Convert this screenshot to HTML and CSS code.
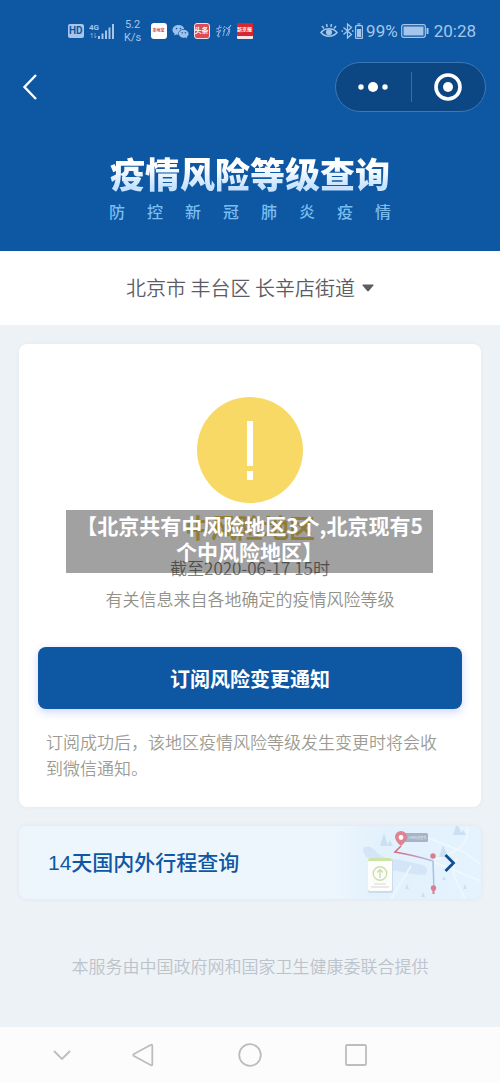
FILE: index.html
```html
<!DOCTYPE html>
<html lang="zh-CN">
<head>
<meta charset="utf-8">
<meta name="viewport" content="width=device-width, initial-scale=1">
<title>疫情风险等级查询</title>
<link rel="stylesheet" href="styles.css">
</head>
<body>
<div class="page">
  <header class="hero">
    <div class="status">
      <div class="status-left">
        <span class="hd">HD</span>
        <svg class="signal" width="26" height="18" viewBox="0 0 26 18" fill="currentColor" aria-hidden="true">
          <text class="signal-text" x="0" y="8">4G</text>
          <path d="M3 11v5M1.500 13L3 11M6 11v5M7.500 14L6 16" stroke="currentColor" fill="none" opacity=".6"/>
          <path d="M9 14h2v3H9zM12.500 11.500h2V17h-2zM16 8.500h2V17h-2zM19.500 5.500h2V17h-2zM23 2h2v15h-2z"/>
        </svg>
        <span class="speed">5.2<br>K/s</span>
        <span class="app app-white">本地宝</span>
        <svg width="17" height="15" viewBox="0 0 17 15" aria-hidden="true">
          <path fill="#9fc1e8" d="M6.500 1C3 1 .5 3.200.5 5.900c0 1.500.8 2.800 2.100 3.700L2.200 11.500l2.100-1.100 2 .3C6 7.500 8.500 5 12.200 5 11.600 2.600 9.400 1 6.500 1z"/>
          <path fill="#9fc1e8" d="M11.800 5.700c-2.800 0-5 1.800-5 4.100s2.200 4 5 4l1.500-.2 1.800 1-.4-1.700c1.200-.8 1.900-1.900 1.900-3.100 0-2.300-2.100-4.100-4.800-4.100z"/>
          <g fill="#0d57a3"><circle cx="4.500" cy="4.600" r=".8"/><circle cx="8.500" cy="4.600" r=".8"/><circle cx="10.200" cy="8.700" r=".7"/><circle cx="13.400" cy="8.700" r=".7"/></g>
        </svg>
        <span class="app app-red">头条</span>
        <svg width="17" height="14" viewBox="0 0 17 14" fill="none" stroke="#9fc1e8" stroke-width=".8" aria-hidden="true">
          <path d="M1 5l6-2M5 1L3 6M1 8l5-2-4 6M4 7l-1 6 2-1M8 5l2-3M8 8l2-3-2 7M11 3l1 2 4-4-3 5 2-1-4 7M13 7l2 0-2 5"/>
        </svg>
        <span class="app app-news">新京报</span>
      </div>
      <div class="status-right">
        <svg width="18" height="16" viewBox="0 0 18 16" fill="none" stroke="currentColor" stroke-width="1.500" aria-hidden="true">
          <path d="M1 9.500c4-5 12-5 16 0-4 5-12 5-16 0zM2 3l2 2.500M6.500 1l.7 3M11.500 1l-.7 3M16 3l-2 2.500"/>
          <circle cx="9" cy="9.300" r="2.300" fill="currentColor"/>
        </svg>
        <svg width="22" height="16" viewBox="0 0 22 16" fill="none" stroke="currentColor" stroke-width="1.300" aria-hidden="true">
          <path d="M2.500 4.500l8 7L6.500 15V1l4 3.500-8 7M.5 8h1.500M11 8h1.500"/>
          <rect x="14.600" y="2.600" width="6.800" height="12.800" rx="1"/>
          <path d="M16.500 1h3" /><path fill="currentColor" stroke="none" d="M16 6h4v8h-4z"/>
        </svg>
        <span class="status-num">99%</span>
        <svg width="28" height="14" viewBox="0 0 28 14" aria-hidden="true">
          <rect x=".7" y=".7" width="23.600" height="12.600" rx="2" fill="none" stroke="currentColor" stroke-width="1.200"/>
          <rect x="2.500" y="2.500" width="20" height="9" fill="currentColor"/>
          <path d="M25.500 4h2v6h-2z" fill="currentColor"/>
        </svg>
        <span class="status-num clock">20:28</span>
      </div>
    </div>
    <div class="topbar">
      <button class="back" type="button" aria-label="返回">
        <svg width="16" height="28" viewBox="0 0 16 28" fill="none" stroke="#fff" stroke-width="2.400"><path d="M14 2L2.500 14 14 26"/></svg>
      </button>
      <div class="capsule">
        <button type="button" aria-label="更多">
          <svg width="30" height="12" viewBox="0 0 30 12" fill="#fff"><circle cx="3" cy="6" r="2.700"/><circle cx="15" cy="6" r="5"/><circle cx="27" cy="6" r="2.700"/></svg>
        </button>
        <button type="button" aria-label="关闭">
          <svg width="28" height="28" viewBox="0 0 28 28"><circle cx="14" cy="14" r="12" fill="none" stroke="#fff" stroke-width="3.600"/><circle cx="14" cy="14" r="5" fill="#fff"/></svg>
        </button>
      </div>
    </div>
    <h1 class="title">疫情风险等级查询</h1>
    <p class="subtitle"><span>防</span><span>控</span><span>新</span><span>冠</span><span>肺</span><span>炎</span><span>疫</span><span>情</span></p>
  </header>

  <label class="region">
    <select class="region-select" aria-label="选择地区"><option>北京市 丰台区 长辛店街道</option></select>
    <svg width="12" height="8" viewBox="0 0 12 8" fill="#5c5c66" aria-hidden="true"><path d="M1 .5h10q1 0 .4.900L6.800 7q-.8.800-1.600 0L.6 1.400Q0 .5 1 .5z"/></svg>
  </label>

  <main class="content">
    <section class="card">
      <svg class="alert" width="106" height="106" viewBox="0 0 106 106" aria-hidden="true">
        <circle cx="53" cy="53" r="53" fill="#f8d966"/>
        <path fill="#fff" d="M50 24h6v45h-6zM50 74h6v9h-6z"/>
      </svg>
      <h2 class="level">中风险地区</h2>
      <p class="date">截至2020-06-17 15时</p>
      <p class="source">有关信息来自各地确定的疫情风险等级</p>
      <button class="subscribe" type="button">订阅风险变更通知</button>
      <p class="note">订阅成功后，该地区疫情风险等级发生变更时将会收到微信通知。</p>
      <p class="caption">【北京共有中风险地区3个,北京现有5个中风险地区】</p>
    </section>

    <a class="trip" href="#trip">
      <span class="trip-text">14天国内外行程查询</span>
      <svg class="trip-map" width="150" height="73" viewBox="0 0 150 73" aria-hidden="true">
        <defs>
          <linearGradient id="fade"><stop offset="0" stop-color="#dceefb" stop-opacity="0"/><stop offset=".4" stop-color="#e2f1fc"/><stop offset="1" stop-color="#e4f3fd"/></linearGradient>
          <linearGradient id="route" gradientUnits="userSpaceOnUse" x1="64" y1="0" x2="103" y2="0"><stop offset="0" stop-color="#d9687f"/><stop offset="1" stop-color="#a9c5e9"/></linearGradient>
        </defs>
        <path fill="url(#fade)" d="M0 0h150v73H0z"/>
        <path fill="#d3e5f7" d="M32 22q6-4 12 2c5 8 16 9 26 10l22 5q7 4 2 10-10 0-23-3-20-3-28-10-12-6-11-14z"/>
        <g fill="none" stroke="#f0f8fe" stroke-width="1.600"><path d="M136 0q3 14-8 22-14 10-28 13l50 20M85 7l50 20 15 12M126 32q-6 14-2 20l10 21M80 40L60 73"/></g>
        <g fill="#cbe0f3"><path d="M53 7l4 13h-8zM59 14l3 6h-6zM126-3l5 12h-9zM132 4l3 5h-6zM112 19l5 12h-9zM76 58l2 5h-4zM92 66l2 5h-4zM134 58l2 5h-4zM113 50l2 4h-4z"/></g>
        <path d="M70 20L64 26q18 3 38 9l1 30" fill="none" stroke="url(#route)" stroke-width="1.600"/>
        <rect x="72" y="7" width="25" height="9" rx="1.500" fill="#a6b4c5"/>
        <text class="map-label" x="77" y="13">14天轨迹查询</text>
        <path fill="#df8291" d="M70 20q-6-5-6-9a6 6 0 0 1 12 0q0 4-6 9z"/><circle cx="70" cy="11.500" r="2.400" fill="#fff"/>
        <g fill="#d97d90"><circle cx="102" cy="30" r="2.700"/><circle cx="102.500" cy="62" r="2.700"/><path d="M101.500 64h2v4h-2z"/></g>
        <rect x="37" y="33" width="25" height="34" rx="2" fill="#cbdced"/>
        <rect x="37" y="32" width="24" height="33" rx="2" fill="#fdfefb"/>
        <path fill="#cbe5a6" d="M39 32h20q2 0 2 3H37q0-3 2-3z"/>
        <g fill="none" stroke="#cbdfa8" stroke-width="1.400"><circle cx="49" cy="47.500" r="6.800"/><path d="M49 52v-8M46 46.500l3-3 3 3"/><path stroke="#d2d7db" stroke-width="1" d="M43 58h12M40 61h18"/></g>
        <path d="M114.500 29l8 8-8 8" fill="none" stroke="#0d4f94" stroke-width="2.800"/>
      </svg>
    </a>
    <p class="provider">本服务由中国政府网和国家卫生健康委联合提供</p>
  </main>

  <nav class="sysnav">
    <button type="button" aria-label="收起"><svg width="22" height="24" viewBox="0 0 22 24"><path d="M3 8l8 8 8-8"/></svg></button>
    <button type="button" aria-label="返回上一页"><svg width="24" height="24" viewBox="0 0 24 24"><path d="M20 1.800L3 11q-1.500 1 0 2l17 9.200q1.300.5 1.300-1V3q0-1.700-1.300-1.200z"/></svg></button>
    <button type="button" aria-label="主屏幕"><svg width="24" height="24" viewBox="0 0 24 24"><circle cx="12" cy="12" r="10.800"/></svg></button>
    <button type="button" aria-label="最近任务"><svg width="24" height="24" viewBox="0 0 24 24"><rect x="2" y="2" width="20" height="20" rx="1"/></svg></button>
  </nav>
</div>
</body>
</html>
```
FILE: styles.css
```css
* {
  box-sizing: border-box;
}

body {
  margin: 0;
  font-family: "Noto Sans CJK SC", sans-serif;
  font-weight: 350;
  background: #edf2f6;
}

h1, h2, p {
  margin: 0;
}

button {
  padding: 0;
  border: 0;
  background: none;
  font: inherit;
}

svg {
  display: block;
  flex: none;
}

.page {
  display: flex;
  flex-direction: column;
  min-height: 100vh;
}

/* Header */
.hero {
  padding-bottom: 28px;
  background: #0d57a3;
  color: #fff;
}

.status {
  display: flex;
  justify-content: space-between;
  align-items: center;
  height: 62px;
  padding: 0 24px 0 68px;
  color: #a5c6ea;
  font-family: Roboto, "Noto Sans CJK SC", sans-serif;
  font-weight: 400;
}

.status-left,
.status-right {
  display: flex;
  align-items: center;
}

.status-left {
  gap: 5px;
}

.status-right {
  gap: 3px;
}

.hd {
  padding: 0 1px;
  border-radius: 2px;
  background: #a5c6ea;
  color: #0d57a3;
  font-size: 10px;
  line-height: 14px;
  font-weight: 700;
}

.signal-text {
  font-size: 8px;
  font-weight: 700;
}

.speed {
  width: 26px;
  font-size: 11px;
  line-height: 13px;
  text-align: center;
}

.app {
  width: 16px;
  height: 16px;
  border-radius: 3px;
  overflow: hidden;
  text-align: center;
  white-space: nowrap;
  font-weight: 700;
  line-height: 16px;
}

.app-white {
  background: #fff;
  color: #cf4b4b;
  font-size: 4px;
}

.app-red {
  border: 1px solid #f3dfe4;
  background: #dd4b55;
  color: #fff;
  font-size: 7px;
  line-height: 14px;
}

.app-news {
  border-bottom: 3px solid #f5e6ea;
  border-radius: 1px;
  background: #d9252f;
  color: #fff;
  font-size: 5px;
  line-height: 13px;
}

.status-num {
  font-size: 17px;
  line-height: 20px;
}

.clock {
  margin-left: 2px;
}

.topbar {
  display: flex;
  justify-content: space-between;
  align-items: center;
  padding: 0 14px 0 22px;
}

.capsule {
  display: flex;
  width: 151px;
  height: 50px;
  border: 1px solid #3d78b6;
  border-radius: 25px;
  background: #0c4783;
}

.capsule button {
  display: grid;
  place-items: center;
  flex: 1;
}

.capsule button + button {
  position: relative;
}

.capsule button + button::before {
  content: "";
  position: absolute;
  left: 0;
  top: 9px;
  bottom: 9px;
  width: 1px;
  background: #3b6ea5;
}

.title {
  margin-top: 40px;
  background: linear-gradient(#fff 35%, #c5e2ff 85%);
  background-clip: text;
  -webkit-background-clip: text;
  color: transparent;
  font-size: 35px;
  line-height: 42px;
  font-weight: 900;
  text-align: center;
}

.subtitle {
  display: flex;
  justify-content: space-between;
  width: 282px;
  margin: 5px auto 0;
  color: #79bdf0;
  font-size: 16px;
  line-height: 24px;
  font-weight: 500;
}

/* Region picker */
.region {
  display: flex;
  justify-content: center;
  align-items: center;
  gap: 7px;
  height: 74px;
  background: #fff;
}

.region-select {
  appearance: none;
  padding: 0;
  border: 0;
  background: none;
  color: #5c5c66;
  font-family: inherit;
  font-size: 20px;
  font-weight: inherit;
  line-height: 30px;
}

/* Cards */
.content {
  display: flex;
  flex-direction: column;
  flex: 1;
  gap: 19px;
  padding: 19px;
}

.card {
  position: relative;
  display: flex;
  flex-direction: column;
  align-items: center;
  padding: 53px 19px 26px;
  border-radius: 8px;
  background: #fff;
  box-shadow: 0 0 4px rgba(30, 60, 100, 0.05);
  text-align: center;
}

.level {
  margin-top: 4px;
  color: #e5c659;
  font-size: 26px;
  line-height: 40px;
  font-weight: 700;
}

.date,
.source {
  font-size: 17px;
  line-height: 26px;
}

.date {
  margin-top: 8px;
  color: #7d7d7b;
}

.source {
  margin-top: 5px;
  color: #929289;
}

.subscribe {
  align-self: stretch;
  height: 62px;
  margin-top: 35px;
  border-radius: 8px;
  background: #0d57a3;
  box-shadow: 0 3px 8px rgba(60, 90, 240, 0.25);
  color: #fff;
  font-size: 20px;
  font-weight: 700;
}

.note {
  align-self: stretch;
  margin-top: 20px;
  padding: 0 20px 0 8px;
  color: #9c9c94;
  font-size: 17px;
  line-height: 26px;
  text-align: left;
}

.caption {
  position: absolute;
  top: 166px;
  left: 47px;
  right: 48px;
  padding: 2px 8px 9px;
  background: rgba(0, 0, 0, 0.37);
  color: #fff;
  font-size: 21px;
  line-height: 26px;
  font-weight: 700;
}

.trip {
  display: flex;
  justify-content: space-between;
  align-items: center;
  padding-left: 29px;
  border-radius: 8px;
  background: #eef6fd;
  box-shadow: 0 0 5px rgba(60, 90, 180, 0.08);
  color: #0d57a3;
  text-decoration: none;
  overflow: hidden;
}

.trip-text {
  padding-bottom: 4px;
  font-family: "Liberation Sans", "Noto Sans CJK SC", sans-serif;
  font-size: 21px;
  font-weight: 500;
}

.map-label {
  fill: #e9eff5;
  font-size: 3px;
}

.provider {
  margin-top: 35px;
  color: #bcc3ca;
  font-size: 17px;
  line-height: 26px;
  text-align: center;
}

/* System navigation */
.sysnav {
  display: grid;
  grid-template-columns: 80fr 82fr 132fr 80fr;
  height: 56px;
  padding: 0 104px 0 22px;
  background: #fcfcfc;
}

.sysnav button {
  display: grid;
  place-items: center;
}

.sysnav svg {
  fill: none;
  stroke: #bdbdbd;
  stroke-width: 1.8px;
}
```
